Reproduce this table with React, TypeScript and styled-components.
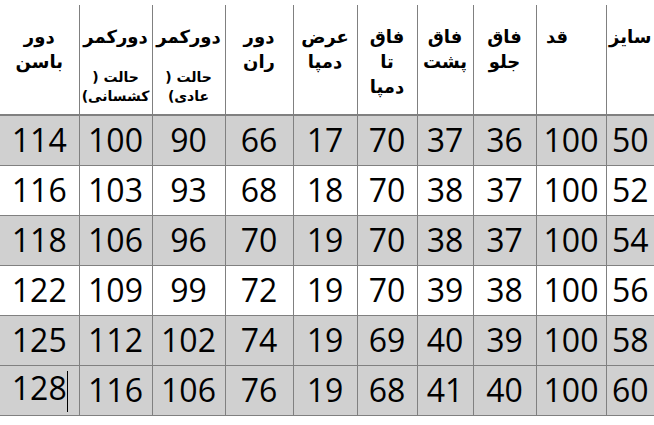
import React from 'react'
import styled, { createGlobalStyle } from 'styled-components'

const GlobalStyle = createGlobalStyle`
  html, body {
    margin: 0;
    padding: 0;
    background: #ffffff;
  }
`

const LINE = '#808080'
const RLM = '\u200F'

const Table = styled.table`
  width: 654px;
  margin-top: 5px;
  border-collapse: collapse;
  table-layout: fixed;
  direction: rtl;
`

const HeadCell = styled.th<{ shift?: number }>`
  box-sizing: border-box;
  height: 110px;
  padding: 19px ${({ shift }) => shift || 0}px 0 0;
  vertical-align: top;
  text-align: center;
  font-family: 'DejaVu Sans', sans-serif;
  font-weight: bold;
  font-size: 18px;
  line-height: 25px;
  color: #000;
  border-left: 1px solid ${LINE};
  border-bottom: 2px solid ${LINE};
  &:last-child {
    border-left: none;
  }
`

const Note = styled.div`
  margin-top: 19px;
  font-size: 14px;
  font-weight: bold;
  line-height: 19px;
`

const Row = styled.tr<{ shaded: boolean }>`
  background: ${({ shaded }) => (shaded ? '#d0d0d0' : '#ffffff')};
`

const Cell = styled.td`
  box-sizing: border-box;
  height: 50px;
  padding: 0;
  text-align: center;
  vertical-align: middle;
  direction: ltr;
  font-family: 'Open Sans', 'DejaVu Sans', sans-serif;
  font-size: 32px;
  line-height: 40px;
  color: #000;
  border-left: 1px solid ${LINE};
  border-bottom: 1px solid ${LINE};
  &:last-child {
    border-left: none;
  }
`

const Caret = styled.span`
  display: inline-block;
  width: 1px;
  height: 41px;
  margin-right: -1px;
  vertical-align: middle;
  background: #000;
`

const widths = [48, 70, 63, 56, 60, 64, 68, 73, 73, 79]

const rows = [
  [50, 100, 36, 37, 70, 17, 66, 90, 100, 114],
  [52, 100, 37, 38, 70, 18, 68, 93, 103, 116],
  [54, 100, 37, 38, 70, 19, 70, 96, 106, 118],
  [56, 100, 38, 39, 70, 19, 72, 99, 109, 122],
  [58, 100, 39, 40, 69, 19, 74, 102, 112, 125],
  [60, 100, 40, 41, 68, 19, 76, 106, 116, 128],
]

const shadedRows = [true, false, true, false, true, true]

function StateNote({ word }: { word: string }) {
  return (
    <Note>
      {`حالت (${RLM}`}
      <br />
      {`${RLM}${word})${RLM}`}
    </Note>
  )
}

export default function App() {
  return (
    <>
      <GlobalStyle />
      <Table>
        <colgroup>
          {widths.map((w, i) => (
            <col key={i} style={{ width: w }} />
          ))}
        </colgroup>
        <thead>
          <tr>
            <HeadCell>سایز</HeadCell>
            <HeadCell shift={28}>قد</HeadCell>
            <HeadCell>فاق<br />جلو</HeadCell>
            <HeadCell>فاق<br />پشت</HeadCell>
            <HeadCell>فاق<br />تا<br />دمپا</HeadCell>
            <HeadCell>عرض<br />دمپا</HeadCell>
            <HeadCell>دور<br />ران</HeadCell>
            <HeadCell>
              دورکمر
              <StateNote word="عادی" />
            </HeadCell>
            <HeadCell>
              دورکمر
              <StateNote word="کشسانی" />
            </HeadCell>
            <HeadCell>دور<br />باسن</HeadCell>
          </tr>
        </thead>
        <tbody>
          {rows.map((r, i) => (
            <Row key={i} shaded={shadedRows[i]}>
              {r.map((v, j) => (
                <Cell key={j}>
                  {v}
                  {i === rows.length - 1 && j === r.length - 1 && <Caret />}
                </Cell>
              ))}
            </Row>
          ))}
        </tbody>
      </Table>
    </>
  )
}
